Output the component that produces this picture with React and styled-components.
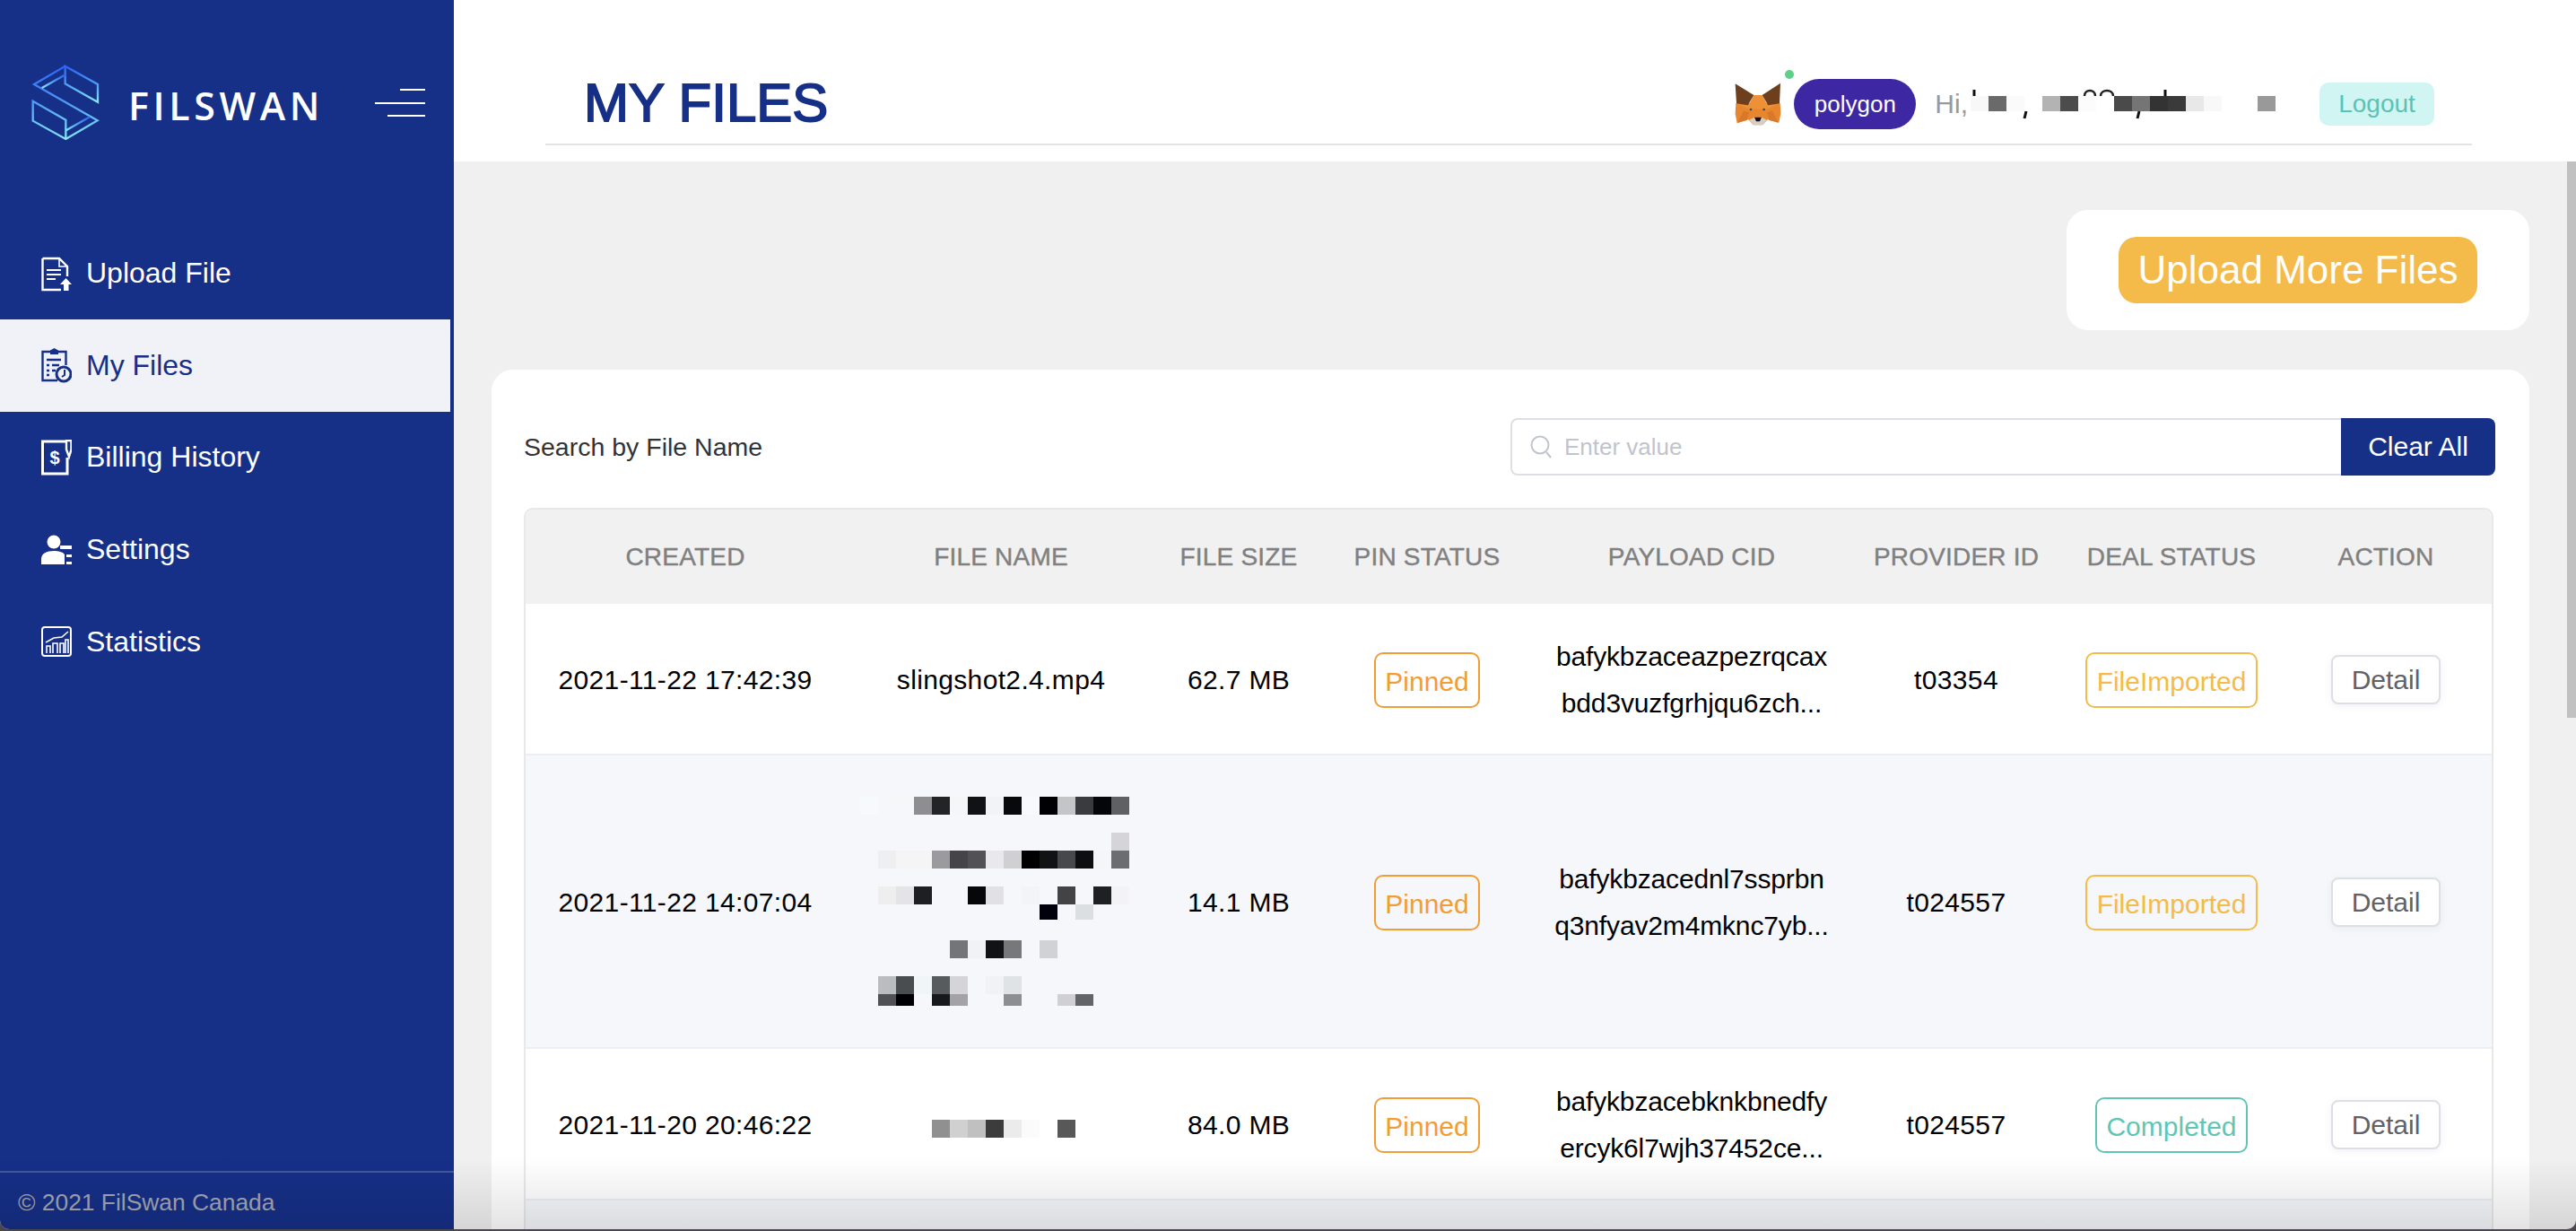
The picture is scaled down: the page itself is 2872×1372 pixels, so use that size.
import React from 'react';
import styled, { createGlobalStyle } from 'styled-components';

// My Files page: sidebar on the left, header + file table on the right

const GlobalStyle = createGlobalStyle`
    html, body {
        margin: 0;
        padding: 0;
        height: 100%;
        overflow: hidden;
        background: #4c4650;
    }
    * {
        box-sizing: border-box;
    }
`;

const Page = styled.div`
    position: relative;
    width: 2872px;
    height: 1370px;
    display: grid;
    grid-template-columns: 506px 1fr;
    overflow: hidden;
    border-radius: 0 0 10px 10px;
    background: #f0f0f0;
    font-family: "Liberation Sans", Arial, sans-serif;
`;

const Sidebar = styled.aside`
    display: flex;
    flex-direction: column;
    height: 1370px;
    padding-right: 4px;
    background: #162f87;
`;

const Brand = styled.div`
    display: flex;
    align-items: flex-start;
    height: 253.5px;
    padding: 70px 0 0 34px;
`;

const BrandName = styled.div`
    margin: 23px 0 0 29px;
    width: 222px;
    color: #fff;
    font-family: "Open Sans", sans-serif;
    font-size: 43px;
    font-weight: 600;
    line-height: 50px;
    letter-spacing: 4.6px;
`;

const Burger = styled.div`
    display: flex;
    flex-direction: column;
    align-items: flex-end;
    gap: 12.5px;
    width: 56px;
    margin: 29px 0 0 53px;
`;

const BurgerLine = styled.span`
    display: block;
    width: ${(p) => p.$w}px;
    height: 2px;
    background: #fff;
`;

const Nav = styled.nav`
    display: flex;
    flex-direction: column;
`;

const NavItem = styled.div`
    display: flex;
    align-items: center;
    gap: 16px;
    height: 102.6px;
    padding-left: 46px;
    background: ${(p) => (p.$active ? '#f0f2f8' : 'transparent')};
    color: ${(p) => (p.$active ? '#162f87' : '#fff')};
    font-size: 32px;
`;

const IconBox = styled.svg`
    flex: none;
    width: 34px;
    height: 40px;
`;

const SideFooter = styled.footer`
    margin: auto -4px 0 0;
    height: 65px;
    padding: 15px 0 0 20px;
    border-top: 2px solid rgba(255, 255, 255, 0.2);
    color: #a3a6b0;
    font-size: 26.4px;
    line-height: 36px;
`;

const Content = styled.main`
    display: flex;
    flex-direction: column;
    min-width: 0;
`;

const Header = styled.header`
    height: 180px;
    flex: none;
    padding: 0 116px 0 102px;
    background: #fff;
`;

const HeaderInner = styled.div`
    display: flex;
    align-items: center;
    height: 162px;
    padding: 72px 42px 0 43px;
    border-bottom: 2px solid #e4e4e4;
`;

const Title = styled.h1`
    margin: -3px auto 0 0;
    color: #162f87;
    font-size: 60px;
    font-weight: 400;
    line-height: 70px;
    -webkit-text-stroke: 1.8px #162f87;
`;

const WalletWrap = styled.div`
    position: relative;
    display: flex;
    align-items: center;
    gap: 14px;
`;

const OnlineDot = styled.span`
    position: absolute;
    left: 56px;
    top: -10px;
    width: 10px;
    height: 10px;
    border-radius: 50%;
    background: #5fcf8a;
`;

const NetworkPill = styled.div`
    width: 136px;
    height: 56px;
    border-radius: 28px;
    background: #3e27a3;
    color: #fff;
    font-size: 26px;
    line-height: 56px;
    text-align: center;
`;

const Greeting = styled.div`
    display: flex;
    align-items: center;
    margin-left: 21px;
    color: #999;
    font-size: 30px;
`;

const GreetingText = styled.span`
    margin-right: 3px;
`;

const LogoutButton = styled.button`
    width: 128px;
    height: 48px;
    margin-left: 44px;
    padding: 0;
    border: none;
    border-radius: 10px;
    background: #d0f5f3;
    color: #5cc2b5;
    font-family: inherit;
    font-size: 28px;
`;

const Body = styled.div`
    flex: 1;
    padding: 54px 52px 0 42px;
    overflow: hidden;
`;

const UploadCard = styled.div`
    display: flex;
    align-items: center;
    width: 516px;
    height: 134px;
    margin: 0 0 44px auto;
    padding-left: 58px;
    border-radius: 24px;
    background: #fff;
`;

const UploadButton = styled.button`
    width: 400px;
    height: 74px;
    padding: 0;
    border: none;
    border-radius: 20px;
    background: #f4bb4a;
    color: #fff;
    font-family: inherit;
    font-size: 44px;
`;

const TableCard = styled.section`
    padding: 54px 38px 0 36px;
    border-radius: 24px 24px 0 0;
    background: #fff;
`;

const SearchRow = styled.div`
    display: flex;
    align-items: center;
    height: 64px;
    margin-bottom: 36px;
`;

const SearchLabel = styled.label`
    margin-right: auto;
    color: #333;
    font-size: 28.5px;
`;

const SearchBox = styled.div`
    display: flex;
    align-items: center;
    gap: 12px;
    width: 926px;
    height: 64px;
    padding-left: 20px;
    border: 2px solid #dcdfe6;
    border-right: none;
    border-radius: 8px 0 0 8px;
`;

const SearchInput = styled.input`
    flex: 1;
    min-width: 0;
    border: none;
    outline: none;
    background: transparent;
    font-family: inherit;
    font-size: 26px;

    &::placeholder {
        color: #c0c4cc;
        opacity: 1;
    }
`;

const ClearButton = styled.button`
    width: 172px;
    height: 64px;
    padding: 0;
    border: none;
    border-radius: 0 8px 8px 0;
    background: #162f87;
    color: #fff;
    font-family: inherit;
    font-size: 30px;
`;

const Table = styled.table`
    width: 2196px;
    table-layout: fixed;
    border-collapse: separate;
    border-spacing: 0;
    border: 2px solid #e8e8e8;
    border-bottom: none;
    border-radius: 10px 10px 0 0;
    text-align: center;
`;

const HeadCell = styled.th`
    height: 105px;
    padding: 0;
    background: #f1f1f1;
    color: #808080;
    font-size: 28px;
    font-weight: 400;
    letter-spacing: 0.2px;
    -webkit-text-stroke: 0.4px #808080;

    &:first-child {
        border-top-left-radius: 8px;
    }
    &:last-child {
        border-top-right-radius: 8px;
    }
`;

const Row = styled.tr`
    background: ${(p) => (p.$striped ? '#f5f7fb' : '#fff')};
`;

const Cell = styled.td`
    height: ${(p) => p.$h}px;
    padding: 2px 0 0;
    border-bottom: 2px solid #ebeef5;
    color: #000;
    font-size: 30px;
    letter-spacing: ${(p) => (p.$wide ? '0.35px' : '0')};
`;

const CidLine = styled.div`
    line-height: 52px;
    white-space: nowrap;
    letter-spacing: -0.15px;
`;

const Tag = styled.span`
    display: inline-block;
    height: 62px;
    padding: 0 10.5px;
    border: 2px solid ${(p) => p.$color};
    border-radius: 10px;
    color: ${(p) => p.$color};
    font-size: 30px;
    line-height: 62px;
`;

const DetailButton = styled.button`
    width: 122px;
    height: 55px;
    padding: 0;
    border: 2px solid #dcdfe6;
    border-radius: 8px;
    background: #fff;
    box-shadow: 0 2px 10px rgba(0, 0, 0, 0.06);
    color: #606266;
    font-family: inherit;
    font-size: 30px;
`;

const MosaicSvg = styled.svg`
    display: ${(p) => (p.$inline ? 'inline-block' : 'block')};
    margin: 0 auto;
    vertical-align: middle;
`;

const ScrollThumb = styled.div`
    position: absolute;
    top: 180px;
    right: 0;
    width: 10px;
    height: 620px;
    background: #c1c1c1;
`;

const BottomShade = styled.div`
    position: absolute;
    left: 0;
    right: 0;
    bottom: 0;
    height: 80px;
    pointer-events: none;
    background: linear-gradient(to bottom, rgba(0, 0, 0, 0), rgba(0, 0, 0, 0.11));
`;

const LogoMark = () => (
    <svg width="80" height="90" viewBox="102 210 240 270" style={{ flex: 'none' }}>
        <defs>
            <linearGradient id="logoGrad" x1="0" y1="0" x2="0" y2="1">
                <stop offset="0" stopColor="#2c62f5" />
                <stop offset="0.5" stopColor="#4f9cf5" />
                <stop offset="1" stopColor="#84e6f8" />
            </linearGradient>
        </defs>
        <g fill="none" stroke="url(#logoGrad)" strokeWidth="7" strokeLinejoin="miter">
            <path d="M218 221 L327 282 L327 341 L218 280 Z" />
            <path d="M218 221 L114 282 L326 403 L220 465 L110 404 L110 338 L220 401 L220 465" />
            <path d="M140 294 L218 250" />
            <path d="M123 347 L123 410" />
            <path d="M221 436 L300 391" />
        </g>
    </svg>
);

const UploadIcon = () => (
    <IconBox viewBox="0 0 34 40">
        <path d="M1.5 3 H20 L29 12 V23 M22 38 H1.5 V3" fill="none" stroke="currentColor" strokeWidth="2.4" />
        <path d="M20 3 V12 H29" fill="none" stroke="currentColor" strokeWidth="1.6" />
        <path d="M6 16 H22 M6 21 H22 M6 26 H16" stroke="currentColor" strokeWidth="2.2" />
        <path d="M27.5 25 L34 32 H30.5 V39 H25 V32 H21 Z" fill="currentColor" />
    </IconBox>
);

const FilesIcon = () => (
    <IconBox viewBox="0 0 34 40">
        <path d="M11 5 H1.5 V37 H18 M19 5 H27.5 V20" fill="none" stroke="currentColor" strokeWidth="2.4" />
        <path d="M10 5 V3.5 L14.5 1 L19 3.5 V8 H10 Z" fill="currentColor" />
        <path d="M6 14 H22 M6 20 H9 M12 20 H20 M6 26 H9 M12 26 H16 M6 31 H9" stroke="currentColor" strokeWidth="2.6" />
        <circle cx="25" cy="30" r="8" fill="none" stroke="currentColor" strokeWidth="3" />
        <path d="M26 25 V31 L23 33" fill="none" stroke="currentColor" strokeWidth="2" />
    </IconBox>
);

const BillingIcon = () => (
    <IconBox viewBox="0 0 34 40">
        <path d="M29 2 H1.5 V38 H29 V20" fill="none" stroke="currentColor" strokeWidth="3" />
        <path d="M28 1 H33.5 V11 L31 19 L28 11 Z" fill="none" stroke="currentColor" strokeWidth="2.4" />
        <text x="15" y="27" fill="currentColor" fontFamily="Liberation Sans, sans-serif" fontSize="20" fontWeight="700" textAnchor="middle">$</text>
    </IconBox>
);

const SettingsIcon = () => (
    <IconBox viewBox="0 0 34 40">
        <circle cx="14" cy="11" r="7.5" fill="currentColor" />
        <path d="M0 36 V30 C0 24 6 21 14 21 C19 21 24 22 26 25 V36 Z" fill="currentColor" />
        <path d="M21 15 H34 V19 H21 Z M28 25 H34 V28 H28 Z M28 33 H34 V36 H28 Z" fill="currentColor" />
    </IconBox>
);

const StatsIcon = () => (
    <IconBox viewBox="0 0 34 40">
        <rect x="1" y="4" width="32" height="32" rx="3" fill="none" stroke="currentColor" strokeWidth="2" />
        <path d="M5 21 L14 16 L23 15 L30 9" fill="none" stroke="currentColor" strokeWidth="1.6" />
        <path d="M6 33 V25 H10 V33 M13 33 V22 H18 V33 M21 33 V22 H25 V33 M27 33 V18 H30 V33" fill="none" stroke="currentColor" strokeWidth="1.6" />
    </IconBox>
);

const Fox = () => (
    <svg width="52" height="48" viewBox="103 96 154 144" style={{ flex: 'none' }}>
        <polygon points="106,165 254,165 256,200 250,230 212,220 196,238 164,238 148,220 110,232 104,200" fill="#e8862e" />
        <polygon points="166,138 194,138 212,172 250,168 210,185 150,185 110,168 148,172" fill="#ee9136" />
        <polygon points="104,100 166,138 146,172 108,166" fill="#6d3f1c" />
        <polygon points="255,98 194,138 214,172 252,166" fill="#6d3f1c" />
        <polygon points="132,190 150,196 142,222 112,230" fill="#d9782a" />
        <polygon points="228,190 210,196 218,222 248,230" fill="#d9782a" />
        <polygon points="150,222 168,212 192,212 210,222 196,238 164,238" fill="#d8cdc2" />
        <polygon points="168,212 192,212 186,226 174,226" fill="#111" />
        <circle cx="156" cy="186" r="4" fill="#3e4a55" />
        <circle cx="200" cy="186" r="4" fill="#3e4a55" />
    </svg>
);

// pixelated (blurred out) text, drawn as grey squares
const Mosaic = ({ box, cells, children, inline }) => {
    const [, , w, h] = box;
    return (
        <MosaicSvg $inline={inline} width={w} height={h} viewBox={box.join(' ')}>
            {cells.map(([cx, cy, cw, ch, color], i) => (
                <rect key={i} x={cx} y={cy} width={cw} height={ch} fill={color} />
            ))}
            {children}
        </MosaicSvg>
    );
};

const cellRow = (startX, y, h, colors) =>
    colors
        .map((c, i) => [startX + i * 20, y, 20, h, c])
        .filter((c) => c[4]);

const emailCells = cellRow(2197, 110, 17, [
    '#f8f8f8', '#6a6a6a', '#fafafa', null, '#b3b3b3', '#4c4c4c', '#fcfcfc', null,
    '#4a4a4a', '#757575', '#333333', '#3a3a3a', '#e8e8e8', '#f8f8f8', null, null, '#999999',
]);

const longNameCells = [
    ...cellRow(958, 890, 20, ['#f6fafd', '#f6f7f9', '#f6f7f9', '#8e8e90', '#232425', '#f5f6f8', '#101214', '#f2f3f6', '#08090b', '#f8f9fc', '#000002', '#c4c5c7', '#3a3b3f', '#05060a', '#5f6063']),
    ...cellRow(978, 930, 20, [null, null, null, null, null, null, null, null, null, null, null, null, null, '#d5d5d9']),
    ...cellRow(978, 950, 20, ['#efeff2', '#f5f5f6', '#f5f5f5', '#9b9b9e', '#454549', '#525156', '#e9e9ed', '#d0d0d3', '#000000', '#111214', '#47484c', '#0d0e10', '#f5f6f8', '#6c6d70']),
    ...cellRow(978, 990, 20, ['#eeeeef', '#e4e4e7', '#1e1f22', null, null, '#060709', '#e1e1e5', null, '#f3f4f7', null, '#434345', null, '#1f2022', '#f3f3f6']),
    ...cellRow(1158, 1010, 17, ['#00010a', null, '#dcdfe2']),
    ...cellRow(1058, 1050, 20, ['#747578', '#f1f2f5', '#101215', '#77787a', null, '#d1d2d6']),
    ...cellRow(978, 1090, 20, ['#babdc0', '#4a4d50', '#f0f5f7', '#575b5e', '#d5d5d9', null, '#f1f2f6', '#e0e3e6']),
    ...cellRow(978, 1110, 13, ['#505155', '#000003', null, '#17181b', '#a3a3a7', null, null, '#8d8e90', null, null, '#d0d0d4', '#636468']),
];

const shortNameCells = cellRow(1038, 1250, 20, ['#909090', '#d0d0d0', '#c0c0c0', '#3c3c3c', '#ebebeb', '#fbfbfb', null, '#585858']);

const navItems = [
    { label: 'Upload File', icon: <UploadIcon /> },
    { label: 'My Files', icon: <FilesIcon />, active: true },
    { label: 'Billing History', icon: <BillingIcon /> },
    { label: 'Settings', icon: <SettingsIcon /> },
    { label: 'Statistics', icon: <StatsIcon /> },
];

const columns = [
    { title: 'CREATED', width: 356 },
    { title: 'FILE NAME', width: 348 },
    { title: 'FILE SIZE', width: 182 },
    { title: 'PIN STATUS', width: 238 },
    { title: 'PAYLOAD CID', width: 352 },
    { title: 'PROVIDER ID', width: 238 },
    { title: 'DEAL STATUS', width: 242 },
    { title: 'ACTION', width: 236 },
];

const files = [
    {
        created: '2021-11-22 17:42:39',
        name: 'slingshot2.4.mp4',
        size: '62.7 MB',
        cid: ['bafykbzaceazpezrqcax', 'bdd3vuzfgrhjqu6zch...'],
        provider: 't03354',
        deal: 'FileImported',
        height: 169,
    },
    {
        created: '2021-11-22 14:07:04',
        name: <Mosaic box={[955, 885, 320, 245]} cells={longNameCells} />,
        size: '14.1 MB',
        cid: ['bafykbzacednl7ssprbn', 'q3nfyav2m4mknc7yb...'],
        provider: 't024557',
        deal: 'FileImported',
        height: 327,
        striped: true,
    },
    {
        created: '2021-11-20 20:46:22',
        name: <Mosaic box={[1030, 1237, 170, 37]} cells={shortNameCells} />,
        size: '84.0 MB',
        cid: ['bafykbzacebknkbnedfy', 'ercyk6l7wjh37452ce...'],
        provider: 't024557',
        deal: 'Completed',
        height: 169,
    },
];

const dealColors = { FileImported: '#f4bb4a', Completed: '#5fc6b5' };

const App = () => {
    return (
        <Page>
            <GlobalStyle />
            <Sidebar>
                <Brand>
                    <LogoMark />
                    <BrandName>FILSWAN</BrandName>
                    <Burger>
                        <BurgerLine $w={28} />
                        <BurgerLine $w={56} />
                        <BurgerLine $w={42} />
                    </Burger>
                </Brand>
                <Nav>
                    {navItems.map((item) => (
                        <NavItem key={item.label} $active={item.active}>
                            {item.icon}
                            {item.label}
                        </NavItem>
                    ))}
                </Nav>
                <SideFooter>© 2021 FilSwan Canada</SideFooter>
            </Sidebar>
            <Content>
                <Header>
                    <HeaderInner>
                        <Title>MY FILES</Title>
                        <WalletWrap>
                            <Fox />
                            <OnlineDot />
                            <NetworkPill>polygon</NetworkPill>
                        </WalletWrap>
                        <Greeting>
                            <GreetingText>Hi,</GreetingText>
                            <Mosaic inline box={[2197, 100, 345, 38]} cells={emailCells}>
                                <path d="M2201 103 V110 M2259 127 L2257 135 M2385 127 L2383 135 M2414 103 V110" stroke="#111" strokeWidth="3" />
                                <path d="M2324 110 C2324 102 2336 102 2336 110 M2342 110 C2342 102 2356 102 2356 110" fill="none" stroke="#222" strokeWidth="2.5" />
                            </Mosaic>
                        </Greeting>
                        <LogoutButton>Logout</LogoutButton>
                    </HeaderInner>
                </Header>
                <Body>
                    <UploadCard>
                        <UploadButton>Upload More Files</UploadButton>
                    </UploadCard>
                    <TableCard>
                        <SearchRow>
                            <SearchLabel>Search by File Name</SearchLabel>
                            <SearchBox>
                                <svg width="24" height="26" viewBox="0 0 24 26" fill="none" stroke="#c0c4cc" strokeWidth="2">
                                    <circle cx="11" cy="11" r="9.5" />
                                    <path d="M18 19 L23 25" />
                                </svg>
                                <SearchInput placeholder="Enter value" />
                            </SearchBox>
                            <ClearButton>Clear All</ClearButton>
                        </SearchRow>
                        <Table>
                            <colgroup>
                                {columns.map((col) => (
                                    <col key={col.title} width={col.width} />
                                ))}
                            </colgroup>
                            <thead>
                                <tr>
                                    {columns.map((col) => (
                                        <HeadCell key={col.title}>{col.title}</HeadCell>
                                    ))}
                                </tr>
                            </thead>
                            <tbody>
                                {files.map((file) => (
                                    <Row key={file.created} $striped={file.striped}>
                                        <Cell $h={file.height} $wide>{file.created}</Cell>
                                        <Cell $h={file.height} $wide>{file.name}</Cell>
                                        <Cell $h={file.height} $wide>{file.size}</Cell>
                                        <Cell $h={file.height}>
                                            <Tag $color="#f39c33">Pinned</Tag>
                                        </Cell>
                                        <Cell $h={file.height}>
                                            {file.cid.map((line) => (
                                                <CidLine key={line}>{line}</CidLine>
                                            ))}
                                        </Cell>
                                        <Cell $h={file.height} $wide>{file.provider}</Cell>
                                        <Cell $h={file.height}>
                                            <Tag $color={dealColors[file.deal]}>{file.deal}</Tag>
                                        </Cell>
                                        <Cell $h={file.height}>
                                            <DetailButton>Detail</DetailButton>
                                        </Cell>
                                    </Row>
                                ))}
                                <Row $striped>
                                    <Cell $h={120} colSpan={8} />
                                </Row>
                            </tbody>
                        </Table>
                    </TableCard>
                </Body>
            </Content>
            <ScrollThumb />
            <BottomShade />
        </Page>
    );
};

export default App;
